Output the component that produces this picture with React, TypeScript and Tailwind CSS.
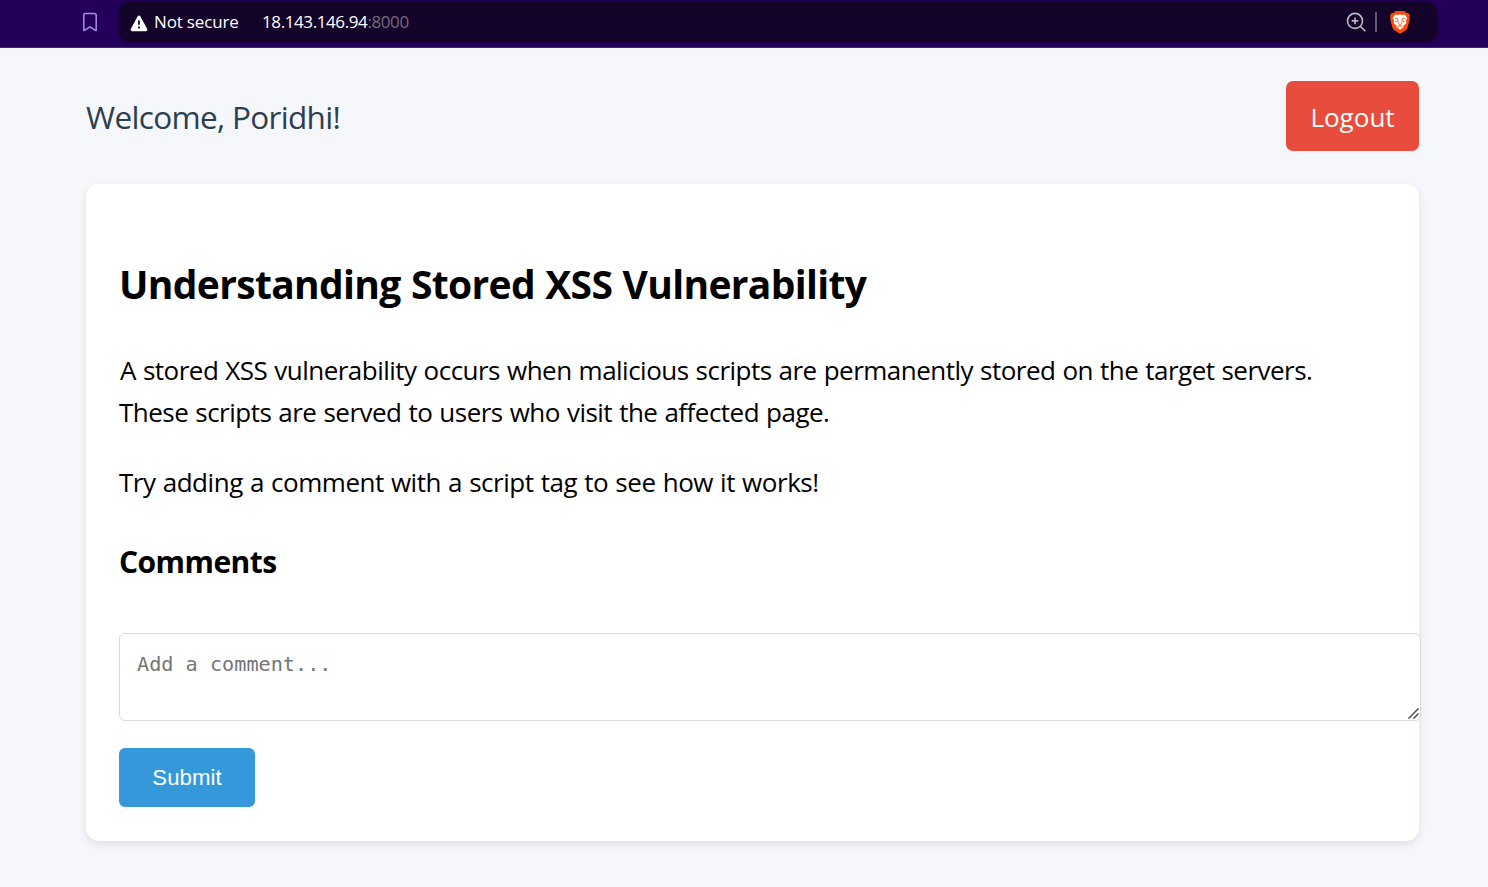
function BraveShield() {
  return (
    <svg className="ml-[13px] mr-[27px] mt-px shrink-0" width="20" height="23" viewBox="0 0 20 23">
      <path d="M5.5 0H14.5L16.5 2L18.2 1.9L20 4.2L19.4 6.2L19.9 7.8L17.6 16.5Q17.2 18 16 18.9L11.2 22.2Q10 23 8.8 22.2L4 18.9Q2.8 18 2.4 16.5L.1 7.8L.6 6.2L0 4.2L1.8 1.9L3.5 2Z" fill="#fb4b0b" />
      <path d="M5.4 3.6L8 4.1L10 3.5L12 4.1L14.6 3.6L17.3 7L15.9 10.1L16.4 12.1L13.3 14.9L13.5 16.1L10 18.8L6.5 16.1L6.7 14.9L3.6 12.1L4.1 10.1L2.7 7Z" fill="#fff" />
      <path d="M5 7.3L8.2 8L7.7 9.3L8.3 11.8M15 7.3L11.8 8L12.3 9.3L11.7 11.8M5.2 10.2L7 10.8M14.8 10.2L13 10.8M8.2 12.4L10 13.6L11.8 12.4M10 13.6V14.8M7.5 15.8L10 14.7L12.5 15.8" fill="none" stroke="#fb4b0b" strokeWidth="0.85" />
    </svg>
  );
}

function BrowserBar() {
  return (
    <header className="h-12 shrink-0 flex items-start bg-[#24005b] border-b border-[#442078] pt-0.5 pl-[82px]">
      <svg className="mt-[10px] shrink-0" width="16" height="20" viewBox="0 0 16 20" fill="none" stroke="#a98cf0" strokeWidth="1.5" strokeLinejoin="round">
        <path d="M1.8 3.2Q1.8 1.4 3.6 1.4H12.4Q14.2 1.4 14.2 3.2V17.9Q14.2 19 13.1 18.2L8 14.9L2.9 18.2Q1.8 19 1.8 17.9Z" />
      </svg>
      <div className="ml-[21px] w-[1318px] h-10 rounded-[10px] bg-[#150429] shadow-[0_0_5px_rgba(0,0,0,0.35)] flex items-center font-['Open_Sans',sans-serif] text-white text-[17px] leading-10 whitespace-pre">
        <svg className="ml-[11px] mt-[2px] shrink-0" width="18" height="17" viewBox="0 0 18 17">
          <path d="M7.6 1.4Q9 -.4 10.4 1.4L17.2 13.9Q17.9 16 15.8 16.2H2.2Q.1 16 .8 13.9Z" fill="#fff" />
          <path d="M9 5.5V9.8M9 11.6V13.5" stroke="#150429" strokeWidth="1.8" />
        </svg>
        <span className="ml-[6px] w-[108px] tracking-[-0.16px]">Not secure</span>
        <span className="tracking-[-0.4px]">18.143.146.94<span className="text-[#756b80]">:8000</span></span>
        <svg className="ml-auto shrink-0" width="20" height="20" viewBox="0 0 20 20" fill="none" stroke="#bcb8c2" strokeWidth="1.6">
          <path d="M14.2 14.2L19.3 19.3M9 5.6V12.2M5.7 8.9H12.3" />
          <circle cx="9" cy="8.9" r="7.5" />
        </svg>
        <span className="ml-[9px] w-0.5 h-5 bg-[#665a70]" />
        <BraveShield />
      </div>
    </header>
  );
}

export default function App() {
  return (
    <div className="w-[1488px] h-[887px] overflow-hidden flex flex-col bg-[#f5f7fb] font-['Open_Sans','Noto_Sans',sans-serif] text-black">
      <BrowserBar />
      <main className="ml-[86px] w-[1333px] pt-[33px]">
        <div className="flex items-center justify-between h-[70px]">
          <h1 className="pt-[2px] text-[31.5px] leading-[42px] tracking-[-0.67px] text-[#2c3e50] whitespace-nowrap">Welcome, Poridhi!</h1>
          <button className="w-[133px] h-[70px] pt-[3px] rounded-[7px] bg-[#e74c3c] text-white text-[26px]">Logout</button>
        </div>
        <section className="mt-[33px] h-[657px] rounded-[13px] bg-white pl-[33px] pt-[73px] shadow-[0_3px_8px_rgba(0,0,0,0.1)] whitespace-nowrap">
          <h2 className="h-[54px] text-[39px] leading-[54px] tracking-[-0.67px] [word-spacing:0.9px] font-bold">Understanding Stored XSS Vulnerability</h2>
          <p className="mt-[38px] pl-px text-[26px] leading-[42px] [word-spacing:0.8px]"><span className="tracking-[-0.52px]">A stored XSS vulnerability occurs when malicious scripts are permanently stored on the target servers.</span><br /><span className="-ml-px tracking-[-0.52px]">These scripts are served to users who visit the affected page.</span></p>
          <p className="mt-7 text-[26px] leading-[42px] tracking-[-0.46px] [word-spacing:0.8px]">Try adding a comment with a script tag to see how it works!</p>
          <h3 className="mt-[37px] text-[30px] leading-[44px] tracking-[-0.55px] font-bold">Comments</h3>
          <form>
            <div className="relative w-[1302px] mt-[49px]">
              <textarea placeholder="Add a comment..." className="block w-[1302px] h-[88px] rounded-[6px] border border-[#d9d9d9] bg-white px-[17px] py-[17px] text-[20.2px] leading-[27px] font-['DejaVu_Sans_Mono',monospace] placeholder:text-[#757575] resize-none" />
              <svg className="absolute right-[2px] bottom-[2px] pointer-events-none" width="11" height="11" viewBox="0 0 11 11" stroke="#4d4d4d" strokeWidth="1.5">
                <path d="M.5 10.5L10.5 .5M5.5 10.5L10.5 5.5" />
              </svg>
            </div>
            <button type="button" className="mt-[27px] w-[136px] h-[59px] rounded-[6px] bg-[#3498db] text-white text-[22.2px] tracking-[0.05px] font-['Liberation_Sans',sans-serif]">Submit</button>
          </form>
        </section>
      </main>
    </div>
  );
}
